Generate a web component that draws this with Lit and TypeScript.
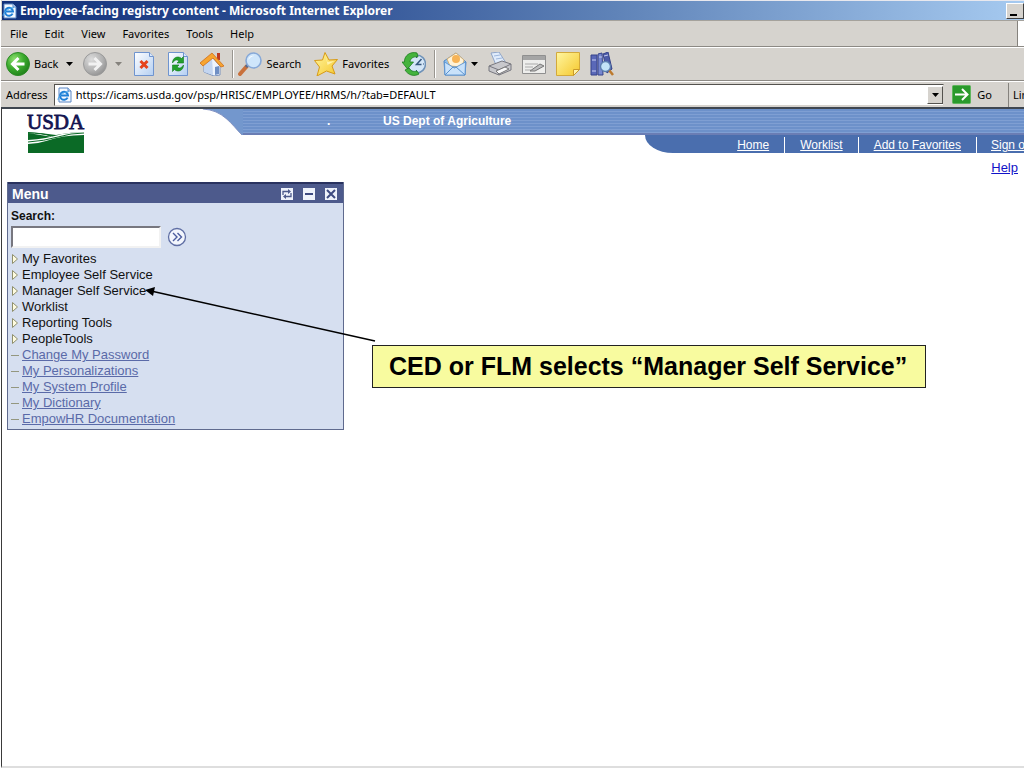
import { LitElement, html, css, svg } from "lit";
import { customElement } from "lit/decorators.js";

const ieGlyph = svg`
  <path d="M2 1h9l3 3v11H2z" fill="#f4f9ff" stroke="#5b86c4"/>
  <path d="M11 1v3h3" fill="#cfe2f8" stroke="#5b86c4"/>
  <path d="M10.6 10.6A4 4 0 1 1 11 8.4H4" fill="none" stroke="#1f7fd6" stroke-width="2"/>
  <path d="M1.2 13.2C0 10.500 6 4.500 12 4.600" fill="none" stroke="#47a6ea" stroke-width="1"/>`;

const defs = svg`
  <defs>
    <radialGradient id="g" cx=".35" cy=".3" r=".8"><stop offset="0" stop-color="#8fe070"/><stop offset=".5" stop-color="#3cab2e"/><stop offset="1" stop-color="#1c7a17"/></radialGradient>
    <radialGradient id="s" cx=".35" cy=".3" r=".8"><stop offset="0" stop-color="#dcdcdc"/><stop offset=".6" stop-color="#b2b2b2"/><stop offset="1" stop-color="#8c8c8c"/></radialGradient>
    <linearGradient id="p" x2="1" y2="1"><stop offset="0" stop-color="#ffffff"/><stop offset="1" stop-color="#b4cff2"/></linearGradient>
    <linearGradient id="y" x2="1" y2="1"><stop offset="0" stop-color="#fff6a0"/><stop offset="1" stop-color="#f5c72c"/></linearGradient>
  </defs>`;

const icons: Record<string, unknown> = {
  back: svg`<circle cx="12" cy="12" r="11.500" fill="url(#g)" stroke="#2c8a25"/>
    <path d="M18.500 12H7M12.500 6L6.500 12l6 6" fill="none" stroke="#fff" stroke-width="3"/>`,
  forward: svg`<circle cx="12" cy="12" r="11.500" fill="url(#s)" stroke="#9a9a9a"/>
    <path d="M5.500 12H17M11.500 6l6 6-6 6" fill="none" stroke="#f2f2f2" stroke-width="3"/>`,
  stop: svg`<path d="M2.500 .5h15l4 4v19h-19z" fill="url(#p)" stroke="#6f94cf"/><path d="M17.500 .5v4h4" fill="#dbe8fa" stroke="#6f94cf"/>
    <path d="M8.500 9l7 7M15.500 9l-7 7" stroke="#e5421d" stroke-width="3"/>`,
  refresh: svg`<path d="M2.500 .5h15l4 4v19h-19z" fill="url(#p)" stroke="#6f94cf"/><path d="M17.500 .5v4h4" fill="#dbe8fa" stroke="#6f94cf"/>
    <path d="M6.500 11c0-6 6-7.500 9-4.500l2-2v6.500h-6.500l2-2c-2.500-2-4.500-1-6.500 2z" fill="#22a02c" stroke="#137a1c" stroke-width=".6"/>
    <path d="M17.500 13c0 6-6 7.500-9 4.500l-2 2v-6.500h6.500l-2 2c2.500 2 4.500 1 6.500-2z" fill="#22a02c" stroke="#137a1c" stroke-width=".6"/>`,
  home: svg`<path d="M17 1h3v7h-3z" fill="#c03a20"/><path d="M4 12l8-7 8 9v9l-6 1-10-4z" fill="#eef4fd" stroke="#7b93bd"/>
    <path d="M4 13l8-8 1 18-9-3z" fill="#c3d5f0"/><path d="M15 15l4-1v8l-4 1z" fill="#6f8fc4"/>
    <path d="M12 1L24 14l-3 1-8-9-10 8-3-3z" fill="#f7a531" stroke="#cf6d1b" stroke-width=".8"/>`,
  search: svg`<path d="M2 22l7-8" stroke="#c9713c" stroke-width="4" stroke-linecap="round"/><path d="M8 15l3-3" stroke="#54698f" stroke-width="3"/>
    <circle cx="15.500" cy="8.500" r="7.500" fill="#cfe6fb" stroke="#87a9d8" stroke-width="1.600"/><path d="M10.500 8c0-3 3-5 6-4-3 0-5 2-6 4z" fill="#fff"/>`,
  star: svg`<path d="M11 .5l4 7.500 8.500-.5-5.500 6.500 3 8-8.500-3L3 24l2.500-9L.5 8.500l8-.5z" fill="url(#y)" stroke="#d79a16"/>
    <path d="M11.500 3l2 7 7-1-7 4z" fill="#fff8c0" opacity=".8"/>`,
  history: svg`<circle cx="14.500" cy="12" r="9" fill="#d4e6f7" stroke="#6f92b8" stroke-width="1.500"/>
    <path d="M19.500 7l-5 5.500h5" fill="none" stroke="#36577e" stroke-width="1.500"/><path d="M14.500 4v2M14.500 18v2M22 12h-1" stroke="#36577e"/>
    <path d="M15 1C8-1 2 4 2.500 10H0l5.500 7 6-7H8c0-3 3-6 8-5z" fill="#45b33c" stroke="#1d7c1f" stroke-width=".8"/>
    <path d="M3 18c3 5 9 7 14 4l-2-3c-4 1-6 0-8-3z" fill="#45b33c" stroke="#1d7c1f" stroke-width=".8"/>`,
  mail: svg`<path d="M1 9L13 1l10 9-1 13H2z" fill="#8fc0ec" stroke="#4f87c6"/><path d="M4 7l9-6 8 7-2 7-12-1z" fill="#fff3d8" stroke="#d9a961" stroke-width=".8"/>
    <circle cx="13" cy="7" r="4" fill="#f6b357"/><path d="M1.500 10l10 6 11-6-.5 13H2z" fill="#c9e2fa" stroke="#5b93cf" stroke-width=".9"/><path d="M2 23l8-8h3l9 8" fill="none" stroke="#5b93cf"/>`,
  print: svg`<path d="M3 1l8-1 7 11-10 2z" fill="#e0ecfc" stroke="#8fa5c8"/><path d="M6 4l6-1M8 7l6-1" stroke="#9db6dc"/>
    <path d="M1 14l13-5 9 3v6l-12 5-10-4z" fill="#c8c8cc" stroke="#77777f"/><path d="M1 14l10 4 12-6M11 18v5" fill="none" stroke="#77777f"/>
    <path d="M8 19l9-4 4 2-10 5z" fill="#f9f9fa" stroke="#777"/>`,
  edit: svg`<path d="M.5 3.500h23v18H.5z" fill="#eeeeec" stroke="#8f8f8f"/><path d="M1 4h22v4H1z" fill="#a5a5a5"/>
    <path d="M3 12h13M3 15h8M3 18h6" stroke="#aaa"/><path d="M8 19l10-7 4 2-9 5z" fill="#bdbdbd" stroke="#777"/>`,
  note: svg`<path d="M.5 .5h23v17l-6 6H.5z" fill="url(#y)" stroke="#d3a93a"/><path d="M17.500 23.500v-6h6z" fill="#fff3a8" stroke="#c99a2a"/>`,
  research: svg`<path d="M1 3h6v20H1z" fill="#5a68b8" stroke="#36428a"/><path d="M2 8h4M2 19h4" stroke="#c6cdf2"/>
    <path d="M8 2l4-1 1 22H8z" fill="#7687cf" stroke="#36428a"/><path d="M13 2l5-2 4 17-5 4z" fill="#4d5ba8" stroke="#36428a"/><path d="M14 4l4-1M9 5h3" stroke="#c6cdf2"/>
    <path d="M19 18l4 5" stroke="#bd7a2e" stroke-width="2.500"/><circle cx="15.500" cy="14.500" r="5" fill="#c3e4f7" stroke="#5c7fae" stroke-width="1.400"/>`,
};

const icon = (name: string) => html`<svg class="icon" viewBox="0 0 24 24" aria-hidden="true">${defs}${icons[name]}</svg>`;
const caret = (dim = false) => html`<svg class="caret ${dim ? "dim" : ""}" viewBox="0 0 7 4" aria-hidden="true"><path d="M0 0h7L3.500 4z" fill="currentColor"/></svg>`;

@customElement("browser-chrome")
class BrowserChrome extends LitElement {
  static styles = css`
    :host { display: block; font: 11px/16px "Noto Sans", "Open Sans", sans-serif; color: #000; background: #d6d3ce; }
    button, input { font: inherit; color: inherit; border: 0; padding: 0; margin: 0; background: none; border-radius: 0; }
    button { display: flex; align-items: center; gap: 4px; white-space: nowrap; }
    .title { display: flex; align-items: center; gap: 2px; height: 19px; margin-left: 1px; border-top: 1px solid #e8e8ee;
      background: linear-gradient(90deg, #12307a, #2d4f93 30%, #5f83b8 60%, #a6caf0); overflow: hidden; }
    h1 { margin: 0; flex: 1; font: bold 12px/18px "Noto Sans", sans-serif; color: #fff; white-space: nowrap; }
    .small { width: 16px; height: 16px; flex: none; }
    .min { width: 18px; height: 16px; flex: none; background: #d6d3ce; border: 1px solid; border-color: #fff #404040 #404040 #fff; align-items: end; }
    .min::before { content: ""; width: 7px; height: 2px; margin: 0 0 2px 3px; background: #000; }
    .menus { display: flex; align-items: center; gap: 17px; height: 25px; padding-left: 9px; border-top: 1px solid #a5a29c; border-bottom: 1px solid #8c8984; }
    .brand { align-self: stretch; width: 6px; margin-left: auto; background: #fff; border-left: 1px solid #85827d; }
    .tools { display: flex; align-items: center; gap: 8px; height: 32px; padding-left: 5px; border-top: 1px solid #fff; border-bottom: 1px solid #8c8984; overflow: hidden; }
    .group { display: flex; align-items: center; gap: 10px; }
    .group.wide { gap: 13px; }
    .group + .group { border-left: 1px solid #98958f; box-shadow: inset 1px 0 #fff; padding-left: 5px; height: 28px; }
    .group.last { padding-left: 8px; }
    .icon { width: 24px; height: 24px; flex: none; }
    .caret { width: 7px; height: 4px; margin-left: 4px; }
    .mail .caret { margin-left: 0; }
    .dim { color: #85827d; }
    .address { display: flex; align-items: center; height: 25px; padding-left: 5px; border-top: 1px solid #fff; gap: 6px; white-space: nowrap; overflow: hidden; }
    .field { display: flex; align-items: center; gap: 3px; flex: 1; height: 20px; padding-left: 2px; background: #fff; border: 1px solid; border-color: #54524e #d6d3ce #d6d3ce #54524e; }
    .field input { flex: 1; min-width: 0; outline: 0; height: 18px; }
    .drop { width: 16px; height: 18px; background: #d6d3ce; border: 1px solid; border-color: #fff #54524e #54524e #fff; justify-content: center; }
    .drop .caret { margin: 0; }
    .go { gap: 6px; margin-left: 2px; }
    .go svg { width: 19px; height: 19px; }
    .links { width: 11px; margin-left: 10px; padding-left: 4px; overflow: hidden; border-left: 1px solid #85827d; line-height: 24px; }
  `;

  render() {
    return html`
      <header class="title">
        <svg class="small" viewBox="0 0 16 16" aria-hidden="true">${ieGlyph}</svg>
        <h1>Employee-facing registry content - Microsoft Internet Explorer</h1>
        <button class="min" aria-label="Minimize"></button>
      </header>
      <nav class="menus">
        ${["File", "Edit", "View", "Favorites", "Tools", "Help"].map((m) => html`<button>${m}</button>`)}
        <span class="brand"></span>
      </nav>
      <div class="tools">
        <div class="group">
          <button>${icon("back")}Back ${caret()}</button>
          <button aria-label="Forward">${icon("forward")}${caret(true)}</button>
          <button aria-label="Stop">${icon("stop")}</button>
          <button aria-label="Refresh">${icon("refresh")}</button>
          <button aria-label="Home">${icon("home")}</button>
        </div>
        <div class="group wide">
          <button>${icon("search")}Search</button>
          <button>${icon("star")}Favorites</button>
          <button aria-label="History">${icon("history")}</button>
        </div>
        <div class="group last">
          <button class="mail" aria-label="Mail">${icon("mail")}${caret()}</button>
          <button aria-label="Print">${icon("print")}</button>
          <button aria-label="Edit page">${icon("edit")}</button>
          <button aria-label="Note">${icon("note")}</button>
          <button aria-label="Research">${icon("research")}</button>
        </div>
      </div>
      <div class="address">
        <label for="url">Address</label>
        <div class="field">
          <svg class="small" viewBox="0 0 16 16" aria-hidden="true">${ieGlyph}</svg>
          <input id="url" type="text" value="https://icams.usda.gov/psp/HRISC/EMPLOYEE/HRMS/h/?tab=DEFAULT">
          <button class="drop" aria-label="Show addresses">${caret()}</button>
        </div>
        <button class="go">
          <svg viewBox="0 0 19 19" aria-hidden="true"><rect x=".5" y=".5" width="18" height="18" rx="1" fill="#2a9a2c" stroke="#5fb55c"/>
            <path d="M3 9.500h12M10 4l5.500 5.500L10 15" fill="none" stroke="#fff" stroke-width="2"/></svg>Go
        </button>
        <span class="links">Links</span>
      </div>`;
  }
}

@customElement("site-header")
class SiteHeader extends LitElement {
  static styles = css`
    :host { display: flex; font: 12px/16px "Liberation Sans", Arial, sans-serif; }
    .logo { width: 198px; flex: none; padding: 2px 0 0 25px; box-sizing: border-box; }
    .logo svg { display: block; width: 58px; height: 43px; }
    .main { flex: 1; min-width: 0; display: flex; flex-direction: column; }
    .banner { display: flex; height: 26px; }
    .curve { width: 43px; height: 26px; flex: none; }
    .bar { flex: 1; display: flex; align-items: center; box-sizing: border-box; padding-left: 84px; color: #fff; font-weight: bold; white-space: nowrap;
      background: repeating-linear-gradient(#6d91ca 0 2px, #7f9fd3 2px 3px); border-bottom: 2px solid #6a7db4; }
    .dot { width: 56px; line-height: 24px; }
    nav { align-self: flex-end; display: flex; align-items: flex-end; height: 18px; padding-left: 77px; background: #4a6eae;
      border-bottom-left-radius: 28px 18px; overflow: hidden; }
    nav a { color: #fff; padding: 0 15px; line-height: 16px; white-space: nowrap; border-right: 1px solid #fff; }
    nav a:last-child { width: 33px; padding: 0 0 0 14px; border: 0; overflow: hidden; }
    .help { align-self: flex-end; margin: 7px 6px 0 0; font-size: 13px; color: #1212c8; }
  `;

  render() {
    return html`
      <div class="logo">
        <svg viewBox="0 0 58 43" role="img" aria-label="USDA">
          <text x="0" y="18" font-family="Liberation Serif, serif" font-size="21" fill="#141450" stroke="#141450" stroke-width=".8">USDA</text>
          <path d="M1 21q14 1 28 3 16-3 28-3v21H1z" fill="#0b6a26"/>
          <path d="M1 22q14 0 25 4M1 29q18-1 34-6 12-2 22-2v3q-22 0-38 6-9 3-18 3z" fill="#fff"/>
          <path d="M1 31q16-1 30-5 13-4 26-4M1 22q14 0 23 3" fill="none" stroke="#0b6a26"/>
        </svg>
      </div>
      <div class="main">
        <div class="banner">
          <svg class="curve" viewBox="0 0 45 27" preserveAspectRatio="none" aria-hidden="true"><path d="M3 0C24 1 33 16 44 27h1V0z" fill="#7397cd"/><path d="M3 0C24 1 33 16 44 27" fill="none" stroke="#7f8fc0"/></svg>
          <div class="bar"><span class="dot">.</span><span>US Dept of Agriculture</span></div>
        </div>
        <nav>
          <a href="#">Home</a><a href="#">Worklist</a><a href="#">Add to Favorites</a><a href="#">Sign out</a>
        </nav>
        <a class="help" href="#">Help</a>
      </div>`;
  }
}

@customElement("menu-pagelet")
class MenuPagelet extends LitElement {
  static styles = css`
    :host { display: block; box-sizing: border-box; background: #d6dff0; border: solid #5f6a8e; border-width: 0 1px 1px; font: 13px/16px "Liberation Sans", Arial, sans-serif; color: #111; }
    header { display: flex; align-items: center; gap: 10px; height: 19px; padding: 0 6px 0 4px; background: #4d5a8c; border-top: 2px solid #29325f; color: #fff; }
    h2 { flex: 1; margin: 0; font-size: 14px; line-height: 18px; }
    header button { display: block; padding: 0; border: 0; width: 12px; height: 12px; background: #eef2fb; }
    header svg { display: block; width: 12px; height: 12px; }
    form { display: grid; grid-template-columns: 150px auto; justify-content: start; align-items: center; column-gap: 6px; padding: 5px 3px 3px; }
    label { grid-column: 1 / -1; font-size: 12px; font-weight: bold; line-height: 16px; margin-bottom: 2px; }
    input { box-sizing: border-box; width: 100%; height: 22px; border: 2px solid; border-color: #77777f #f2f2f2 #f2f2f2 #77777f; background: #fff; border-radius: 0; outline: 0; padding: 0; font: inherit; }
    .go { width: 20px; height: 20px; padding: 0; border: 0; background: none; }
    .go svg { display: block; width: 20px; height: 20px; }
    ul { list-style: none; margin: 0; padding: 0 0 2px 3px; }
    li { display: flex; align-items: center; gap: 3px; white-space: nowrap; }
    li svg { width: 8px; height: 12px; flex: none; }
    a { color: #111; text-decoration: none; }
    .leaf a { color: #5a6aa8; text-decoration: underline; }
  `;

  folders = ["My Favorites", "Employee Self Service", "Manager Self Service", "Worklist", "Reporting Tools", "PeopleTools"];
  pages = ["Change My Password", "My Personalizations", "My System Profile", "My Dictionary", "EmpowHR Documentation"];

  render() {
    return html`
      <header>
        <h2>Menu</h2>
        <button aria-label="Refresh"><svg viewBox="0 0 12 12"><path d="M2 7V3.500h6M10 5v3.500H4" fill="none" stroke="#4d5a8c" stroke-width="1.300"/><path d="M7 1l3 2.500L7 6zM5 6L2 8.500 5 11z" fill="#4d5a8c"/></svg></button>
        <button aria-label="Minimize"><svg viewBox="0 0 12 12"><path d="M2 6h8" stroke="#3d4a80" stroke-width="2"/></svg></button>
        <button aria-label="Close"><svg viewBox="0 0 12 12"><path d="M2 2l8 8M10 2l-8 8" stroke="#3d4a80" stroke-width="2"/></svg></button>
      </header>
      <form @submit=${(e: Event) => e.preventDefault()}>
        <label for="q">Search:</label>
        <input id="q" type="text">
        <button class="go" aria-label="Search"><svg viewBox="0 0 20 20"><circle cx="10" cy="10" r="8.500" fill="#f3f6fd" stroke="#5f6ea4" stroke-width="1.300"/><path d="M6 6l4 4-4 4M10.500 6l4 4-4 4" fill="none" stroke="#4c5d9f" stroke-width="1.400"/></svg></button>
      </form>
      <ul>
        ${this.folders.map((t) => html`<li><svg viewBox="0 0 8 12"><path d="M1.500 1.500v9l5-4.500z" fill="#fffce0" stroke="#8f8f6c"/></svg><a href="#">${t}</a></li>`)}
        ${this.pages.map((t) => html`<li class="leaf"><svg viewBox="0 0 8 12"><path d="M0 6.500h8" stroke="#94977f"/></svg><a href="#">${t}</a></li>`)}
      </ul>`;
  }
}

@customElement("app-root")
class AppRoot extends LitElement {
  static styles = css`
    :host { display: flex; flex-direction: column; min-height: 100vh; overflow: hidden; background: #fff; }
    browser-chrome { margin-left: 1px; }
    main { position: relative; flex: 1; margin-left: 1px; border-left: 1px solid #3a3a3a; border-top: 2px solid #3f4650; border-bottom: 2px solid #dedede; }
    menu-pagelet { width: 33%; margin: 6px 0 0 5px; }
    .arrow { position: absolute; left: 143px; top: 178px; width: 232px; height: 56px; }
    .callout { position: absolute; left: 370px; top: 236px; margin: 0; padding: 6px 18px 6px 16px; border: 1px solid #222; background: #f8fb9f; color: #000;
      font: bold 25px/29px "Liberation Sans", Arial, sans-serif; white-space: nowrap; }
  `;

  render() {
    return html`
      <browser-chrome></browser-chrome>
      <main>
        <site-header></site-header>
        <menu-pagelet></menu-pagelet>
        <svg class="arrow" viewBox="0 0 232 56" aria-hidden="true"><path d="M6 4L230 54" stroke="#000" stroke-width="1.500"/><path d="M0 3l10-3-2 9z"/></svg>
        <p class="callout">CED or FLM selects “Manager Self Service”</p>
      </main>`;
  }
}
